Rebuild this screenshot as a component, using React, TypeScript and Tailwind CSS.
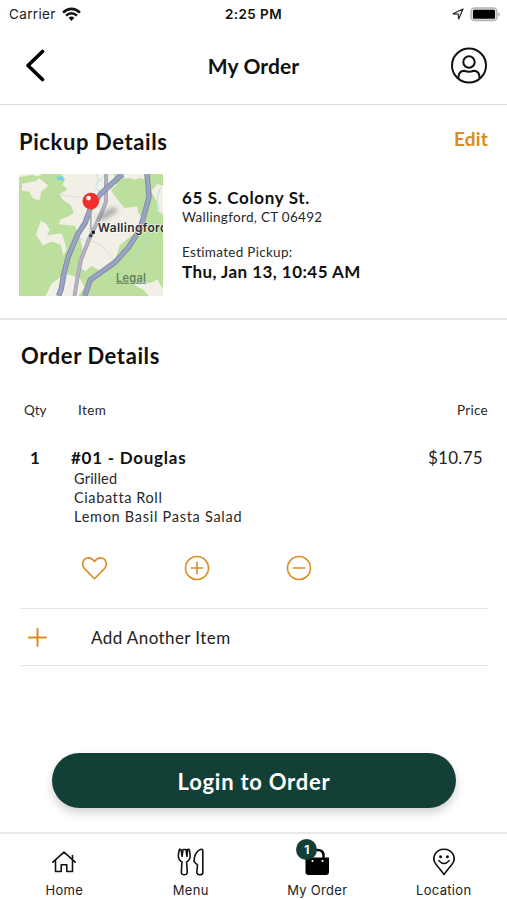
import React from "react";

function Wifi() {
  return (
    <svg className="ml-[6px] h-[15px] w-[19px]" viewBox="0 0 19 15" fill="none" stroke="#111">
      <path d="M1 5.600Q9.500 -2 18 5.600" strokeWidth="2.600" />
      <path d="M4 8.700Q9.500 3.800 15 8.700" strokeWidth="2.400" />
      <path d="M6.600 10.800Q9.500 8.400 12.400 10.800L9.500 14Z" fill="#111" stroke="none" />
    </svg>
  );
}

function StatusBar() {
  return (
    <div className="grid h-7 grid-cols-3 items-center font-['Inter',sans-serif] text-[13.5px]">
      <div className="flex items-center pl-[9px] text-[#222]">
        <span className="tracking-[0.35px]">Carrier</span>
        <Wifi />
      </div>
      <div className="text-center text-[13.5px] font-semibold tracking-[0.4px]">2:25 PM</div>
      <div className="flex items-center justify-end pr-[6px]">
        <svg className="mr-[6px] h-[12px] w-[12px]" viewBox="0 0 12 12" fill="none" stroke="#222" strokeWidth="1.2" strokeLinejoin="round">
          <path d="M1 5.800L11 1L6.700 11L6.200 6.200Z" />
        </svg>
        <svg className="h-[15px] w-[31px]" viewBox="0 0 31 15">
          <rect x="1" y="1" width="26" height="12.600" rx="3.500" fill="#ddd" stroke="#b5b5b5" strokeWidth="1.500" />
          <rect x="3" y="2.800" width="22" height="9" rx="1.500" fill="#000" />
          <path d="M28.600 5.200Q31 7.300 28.600 9.400Z" fill="#999" />
        </svg>
      </div>
    </div>
  );
}

function Header() {
  return (
    <header className="flex h-[77px] items-center justify-between border-b border-[#dedede] pr-[19px] pl-[25px]">
      <svg className="h-[34px] w-[32px]" viewBox="0 0 32 34" fill="none" stroke="#000" strokeWidth="3.600" strokeLinecap="round" strokeLinejoin="round">
        <path d="M17.500 2.500L3 16.500L17.500 30.500" />
      </svg>
      <h1 className="text-[21px] font-bold tracking-[0.1px]">My Order</h1>
      <svg className="h-[38px] w-[38px]" viewBox="0 0 38 38" fill="none" stroke="#111" strokeWidth="2">
        <circle cx="19" cy="18.500" r="17" />
        <circle cx="19" cy="15" r="5.700" />
        <path d="M8.500 31.500V30Q8.800 24.100 14 23.800Q19 25.700 24 23.800Q29.200 24.100 29.500 30V31.500" />
      </svg>
    </header>
  );
}

function MapPreview() {
  return (
    <svg className="h-[122px] w-[144px] shrink-0" viewBox="27 27 433 365" preserveAspectRatio="none">
      <defs>
        <filter id="soft" x="-50%" y="-50%" width="200%" height="200%">
          <feGaussianBlur stdDeviation="8" />
        </filter>
      </defs>
      <rect x="27" y="27" width="433" height="365" fill="#bcdf9d" />
      <g fill="#f1efe6">
        <path d="M36 56L76 49L88 40L116 62L94 80L88 107L67 98L58 79L36 78Z" />
        <path d="M27 27H100L83 34L66 30L27 37Z" />
        <path d="M154 27L166 42L158 58L173 74L149 86L156 101L183 121L192 142L178 153L151 164L146 177L194 182L209 210L224 284L212 307L226 319L245 302L278 321L304 292L316 284L330 241L375 202L399 158L386 145L383 124L343 129L315 92L303 75L320 60L311 27Z" />
        <path d="M93 166L108 176L120 193L111 211L155 204L163 226L170 254L160 271L152 237L124 230L99 240L78 209Z" />
        <path d="M125 355L151 336L174 326L211 340L224 366L206 392H106L114 377Z" />
        <path d="M207 282L224 265L231 297L218 306Z" />
        <path d="M337 27L404 27L405 43L391 38L377 44L356 39L345 41Z" />
        <path d="M424 79L443 57L460 62V147L444 140L442 110Z" />
        <path d="M374 360L395 346L420 354L444 343L460 373V392H417L402 374Z" />
      </g>
      <g fill="none" stroke="#9ed9e6" strokeWidth="2">
        <path d="M259 27L266 45L257 65L270 83M278 35L268 51" />
        <path d="M454 66L443 93L447 133L431 175L412 213L407 245L381 266L378 307" />
        <path d="M178 257L166 302L172 326L160 365" />
      </g>
      <path d="M133 27L141 36L158 33L162 47L144 45Z" fill="#72cdf3" />
      <path d="M187 220L252 229L276 241L315 286M145 88L224 99M245 120L240 202" fill="none" stroke="#d3d4d0" strokeWidth="2" />
      <path d="M289 27L288 112L270 155L238 221L213 285L203 336L194 392" fill="none" stroke="#9fa0b1" strokeWidth="12" />
      <path d="M289 27L288 112L270 155L238 221L213 285L203 336L194 392" fill="none" stroke="#b4b2c3" strokeWidth="8" />
      <path d="M338 27L273 86L242 130L226 173L203 208L175 275L161 329L154 371L146 392M412 27L418 95L405 144L390 195L356 247L316 291L272 322L241 344L225 392" fill="none" stroke="#7c87a5" strokeWidth="16" strokeLinejoin="round" />
      <path d="M338 27L273 86L242 130L226 173L203 208L175 275L161 329L154 371L146 392M412 27L418 95L405 144L390 195L356 247L316 291L272 322L241 344L225 392" fill="none" stroke="#98a4c2" strokeWidth="11" strokeLinejoin="round" />
      <path d="M257 160L310 126L326 136L281 164Z" fill="#555" opacity=".5" filter="url(#soft)" />
      <path d="M243 130V194" stroke="#aaa" strokeWidth="5" />
      <circle cx="243" cy="108" r="25" fill="#f52d2b" />
      <circle cx="236" cy="99" r="7" fill="#fff" />
      <rect x="246" y="197" width="9" height="9" fill="#151515" />
      <rect x="238" y="207" width="9" height="9" fill="#444" />
      <text x="264" y="200" fontFamily="Inter, sans-serif" fontSize="36" fontWeight="600" letterSpacing="1" fill="#292d32" stroke="#fff" strokeWidth="3" paintOrder="stroke">Wallingford</text>
      <text x="319" y="349" fontFamily="Inter, sans-serif" fontSize="33" fontWeight="600" letterSpacing="0.8" fill="#668064" textDecoration="underline">Legal</text>
    </svg>
  );
}

function PickupDetails() {
  return (
    <section className="h-[215px] border-b-2 border-[#e4e4e4] pt-[22px] pr-[19px] pl-[19px]">
      <div className="flex h-[28px] items-center justify-between">
        <h2 className="text-[22px] font-bold tracking-[0.6px]">Pickup Details</h2>
        <button className="pb-[4px] text-[19px] font-bold tracking-[0.2px] text-[#d98c21]">Edit</button>
      </div>
      <div className="mt-[19px] flex">
        <MapPreview />
        <div className="pt-[13px] pl-[19px]">
          <p className="text-[17px] leading-[22px] font-bold tracking-[0.65px]">65 S. Colony St.</p>
          <p className="text-[13.5px] leading-[16px] tracking-[0.3px] text-[#292929]">Wallingford, CT 06492</p>
          <p className="mt-[18px] text-[13.5px] leading-[18px] tracking-[0.3px] text-[#292929]">Estimated Pickup:</p>
          <p className="mt-px text-[17px] leading-[20px] font-bold tracking-[0.45px]">Thu, Jan 13, 10:45 AM</p>
        </div>
      </div>
    </section>
  );
}

function ItemActions() {
  return (
    <div className="mt-[29px] flex gap-[76px] pl-[62px] text-[#dc8b27]">
      <svg className="h-[26px] w-[26px]" viewBox="0 0 26 26" fill="none" stroke="currentColor" strokeWidth="1.600" strokeLinejoin="round">
        <path d="M12.500 23.800L2.100 13.100C-.6 9.600 .7 3.800 5.300 3C8.500 2.400 11 4.500 12.500 6.600C14 4.500 16.500 2.400 19.700 3C24.300 3.800 25.600 9.600 22.900 13.100Z" />
      </svg>
      <svg className="h-[26px] w-[26px]" viewBox="0 0 26 26" fill="none" stroke="currentColor" strokeWidth="1.600" strokeLinecap="round">
        <circle cx="13" cy="13" r="11.500" /><path d="M7.300 13H18.700M13 7.300V18.700" />
      </svg>
      <svg className="h-[26px] w-[26px]" viewBox="0 0 26 26" fill="none" stroke="currentColor" strokeWidth="1.600" strokeLinecap="round">
        <circle cx="13" cy="13" r="11.500" /><path d="M7.300 13H18.700" />
      </svg>
    </div>
  );
}

function OrderDetails() {
  return (
    <section className="flex-1 pt-[22px] pr-[19px] pl-5">
      <h2 className="pl-px text-[22px] leading-[28px] font-bold tracking-[0.6px]">Order Details</h2>
      <div className="mt-[31px] flex text-[13.5px] leading-[18px] text-[#292929]">
        <span className="w-[58px] pl-1">Qty</span><span className="tracking-[0.4px]">Item</span><span className="ml-auto tracking-[0.3px]">Price</span>
      </div>
      <div className="mt-[28px] flex">
        <span className="w-[51px] pl-[10px] text-[17px] leading-[22px] font-bold">1</span>
        <div className="flex-1">
          <p className="text-[17px] leading-[22px] font-bold tracking-[0.75px]">#01 - Douglas</p>
          <div className="pl-[3px] text-[14.5px] leading-[19px] text-[#292929]">
            <p className="tracking-[0.2px]">Grilled</p>
            <p className="tracking-[0.6px]">Ciabatta Roll</p>
            <p className="tracking-[0.72px]">Lemon Basil Pasta Salad</p>
          </div>
        </div>
        <span className="pr-[5px] text-[17px] leading-[22px] tracking-[0.3px] text-[#222]">$10.75</span>
      </div>
      <ItemActions />
      <div className="mt-[27px] flex h-[58px] items-center border-y border-[#e4e4e4] pl-[8px]">
        <svg className="h-[19px] w-[19px] text-[#dc8b27]" viewBox="0 0 19 19" stroke="currentColor" strokeWidth="2" strokeLinecap="round">
          <path d="M1 9.500H18M9.500 1V18" />
        </svg>
        <span className="pt-[2px] pl-[44px] text-[17px] tracking-[0.42px] text-[#222]">Add Another Item</span>
      </div>
    </section>
  );
}

function HomeIcon() {
  return (
    <svg className="h-[28px] w-[28px]" viewBox="0 0 28 28" fill="none" stroke="#111" strokeWidth="1.600" strokeLinejoin="round" strokeLinecap="round">
      <path d="M2.800 14.200L14 4.200L25.200 14.200M5.500 12.500V23.500H11.200V16.700H16.800V23.500H22.500V12M22.500 11V7.500" />
    </svg>
  );
}

function MenuIcon() {
  return (
    <svg className="h-[28px] w-[28px]" viewBox="0 0 28 28" fill="none" stroke="#111" strokeWidth="1.600" strokeLinejoin="round">
      <path d="M2.500 1.200Q.5 8 2 11Q3 13 5 14L4.300 24.500Q4.600 26.800 7.300 26.800Q10 26.800 10.300 24.500L9.600 14Q11.700 13 12.500 11Q14 8 12 1.200L10.500 1.500L10 8.500L8.900 1.500H6L5.100 8.500L4 1.500Z" />
      <path d="M25.800 25V2Q25.300 .8 23.500 1.400Q17 4.500 17 13.500L20.500 17L19.800 24.800Q20.500 27 23 26.800Q25.500 26.800 25.800 25Z" />
    </svg>
  );
}

function BagIcon() {
  return (
    <svg className="h-[28px] w-[28px]" viewBox="0 0 28 28">
      <path d="M8.500 11V7.500Q8.500 2 14.500 2Q20.500 2 20.500 7.500V11" fill="none" stroke="#000" strokeWidth="2.400" />
      <path d="M2.500 9.500H26V24Q26 27 23 27H5.500Q2.500 27 2.500 24Z" fill="#000" />
      <circle cx="9.500" cy="13" r="1.100" fill="#fff" /><circle cx="19.500" cy="13" r="1.100" fill="#fff" />
    </svg>
  );
}

function LocationIcon() {
  return (
    <svg className="h-[28px] w-[28px]" viewBox="0 0 28 28" fill="none" stroke="#111" strokeWidth="1.600" strokeLinejoin="round" strokeLinecap="round">
      <path d="M14 26.500Q12.800 24.500 6.100 16.400C.9 10 5.500 1.300 14 1.300S27.100 10 21.900 16.400Q15.200 24.500 14 26.500Z" />
      <circle cx="10.600" cy="8.700" r=".7" fill="#111" /><circle cx="17.400" cy="8.700" r=".7" fill="#111" />
      <path d="M9 12.700Q14 18.300 19 12.700" />
    </svg>
  );
}

function Tab({ label, children }: { label: string; children: React.ReactNode }) {
  return (
    <button className="flex flex-col items-center pt-[14px] text-[13px] leading-[16px] tracking-[0.3px] text-[#222]">
      {children}
      <span className="mt-[6px]">{label}</span>
    </button>
  );
}

export default function App() {
  return (
    <main className="flex h-[900px] w-[507px] flex-col overflow-hidden bg-white font-['Lato','Liberation_Sans',sans-serif] text-[#111]">
      <StatusBar />
      <Header />
      <PickupDetails />
      <OrderDetails />
      <div className="px-[52px] pb-6">
        <button className="h-[55px] w-[404px] rounded-full bg-[#124036] pt-px text-[22px] font-bold tracking-[0.75px] text-white shadow-[0_5px_10px_rgba(0,0,0,0.18)]">Login to Order</button>
      </div>
      <nav className="grid h-[68px] grid-cols-4 border-t-2 border-[#e9e9e9] pl-px font-['Inter',sans-serif]">
        <Tab label="Home"><HomeIcon /></Tab>
        <Tab label="Menu"><MenuIcon /></Tab>
        <Tab label="My Order">
          <span className="relative">
            <BagIcon />
            <span className="absolute -top-[9px] -left-[7px] flex h-[21px] w-[21px] items-center justify-center rounded-full bg-[#124036] text-[12px] font-bold tracking-normal text-white">1</span>
          </span>
        </Tab>
        <Tab label="Location"><LocationIcon /></Tab>
      </nav>
    </main>
  );
}
